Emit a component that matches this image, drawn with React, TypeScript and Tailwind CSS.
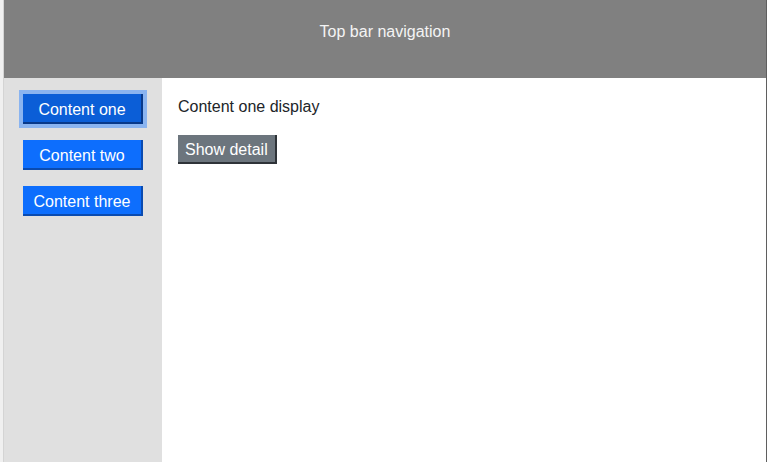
import React, { useState } from 'react';

const ITEMS = ['Content one', 'Content two', 'Content three'];

const App: React.FC = () => {
  const [active, setActive] = useState(0);
  const [detail, setDetail] = useState(false);

  return (
    <div className="flex h-screen w-full bg-[#f0f0f0] font-['Liberation_Sans',sans-serif] text-base">
      <div className="w-[3px] shrink-0 bg-[#f0f0f0]" />
      <div className="flex min-w-0 flex-1 flex-col border-l border-r border-l-[#d4d4d4] border-r-[#5f5f5f]">
        {/* top bar */}
        <div className="flex h-[78px] shrink-0 justify-center bg-[#808080] pt-[20px] leading-6 text-[#f4f4f4]">
          Top bar navigation
        </div>

        <div className="flex flex-1">
          {/* sidebar */}
          <div className="flex w-[158px] shrink-0 flex-col items-center gap-4 bg-[#e0e0e0] pt-4">
            {ITEMS.map((label, i) => (
              <button
                key={label}
                onClick={() => setActive(i)}
                className={
                  i === active
                    ? 'h-[30px] w-[120px] border-r-2 border-b-2 border-r-[#08398a] border-b-[#08398a] bg-[#0b5ed7] pt-[3px] leading-5 text-white outline-4 outline-[#8ab4f0]'
                    : 'h-[30px] w-[120px] border-r-2 border-b-2 border-r-[#0a4bb0] border-b-[#0a4bb0] bg-[#0d6efd] pt-[3px] leading-5 text-white'
                }
              >
                {label}
              </button>
            ))}
          </div>

          {/* main */}
          <div className="flex flex-1 flex-col items-start gap-4 bg-white px-4 pt-[17px] text-[#212529]">
            <div className="leading-6">{ITEMS[active]} display</div>
            <button
              onClick={() => setDetail(!detail)}
              className="h-[29px] border-r-2 border-b-2 border-r-[#2e3338] border-b-[#2e3338] bg-[#6c757d] px-[7px] pt-[3px] leading-5 text-white"
            >
              Show detail
            </button>
            {detail && <div>Detail for {ITEMS[active].toLowerCase()}</div>}
          </div>
        </div>
      </div>
    </div>
  );
};

export default App;
